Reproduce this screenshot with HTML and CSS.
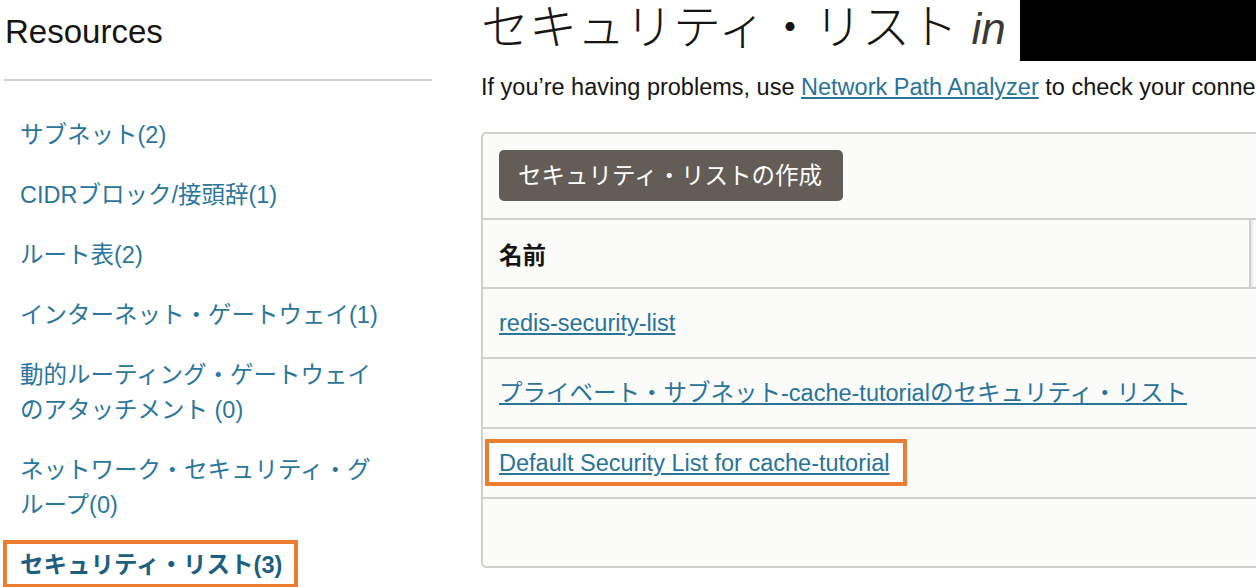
FILE: index.html
```html
<!DOCTYPE html>
<html lang="ja">
<head>
<meta charset="utf-8">
<title>セキュリティ・リスト</title>
<link rel="stylesheet" href="styles.css">
</head>
<body>
<div class="page">
  <aside class="sidebar">
    <h2 class="side-title">Resources</h2>
    <ul class="nav">
      <li class="nav-item"><a href="#">サブネット(2)</a></li>
      <li class="nav-item"><a href="#">CIDRブロック/接頭辞(1)</a></li>
      <li class="nav-item"><a href="#">ルート表(2)</a></li>
      <li class="nav-item"><a href="#">インターネット・ゲートウェイ(1)</a></li>
      <li class="nav-item"><a href="#">動的ルーティング・ゲートウェイ<br>のアタッチメント (0)</a></li>
      <li class="nav-item"><a href="#">ネットワーク・セキュリティ・グ<br>ループ(0)</a></li>
      <li class="nav-item selected"><a href="#">セキュリティ・リスト(3)</a></li>
    </ul>
  </aside>
  <main class="main">
    <div class="title-row">
      <h1 class="title">セキュリティ・リスト <em>in</em></h1>
      <div class="redacted"></div>
    </div>
    <p class="hint">If you’re having problems, use <a href="#">Network Path Analyzer</a> to check your connectivity configuration.</p>
    <section class="panel">
      <div class="toolbar">
        <button class="btn">セキュリティ・リストの作成</button>
      </div>
      <div class="thead">
        <div class="th th-name">名前</div>
        <div class="th th-rest"></div>
      </div>
      <div class="row"><a href="#">redis-security-list</a></div>
      <div class="row"><a href="#">プライベート・サブネット-cache-tutorialのセキュリティ・リスト</a></div>
      <div class="row"><a href="#" class="boxed">Default Security List for cache-tutorial</a></div>
      <div class="empty"></div>
    </section>
  </main>
</div>
</body>
</html>
```

FILE: styles.css
```css
html, body {
  margin: 0;
  padding: 0;
  overflow: hidden;
  background: #ffffff;
}

body {
  font-family: "Liberation Sans", "Noto Sans CJK JP", sans-serif;
  color: #161513;
  width: 1256px;
  height: 587px;
}

a {
  color: #2a7399;
}

.page {
  display: flex;
  align-items: flex-start;
}

/* Sidebar */
.sidebar {
  width: 428px;
  margin-left: 4px;
  flex: none;
}

.side-title {
  margin: 0;
  padding: 12px 0 0 1px;
  font-size: 33px;
  line-height: 40px;
  font-weight: 400;
  color: #161513;
  height: 67px;
  border-bottom: 2px solid #d1cdc9;
  box-sizing: content-box;
}

.nav {
  list-style: none;
  margin: 0;
  padding: 37px 0 0 16px;
  display: flex;
  flex-direction: column;
  gap: 25px;
}

.nav-item {
  font-size: 23.5px;
  line-height: 35px;
}

.nav-item a {
  text-decoration: none;
  color: #2b769c;
}

.nav-item.selected {
  width: fit-content;
  margin: -8px 0 0 -17px;
  padding: 4px 12px 1px 13px;
  border: 4px solid #ed7d31;
  background: #ffffff;
}

.nav-item.selected a {
  font-weight: 700;
  color: #1d5f80;
}

/* Main */
.main {
  margin-left: 49px;
  flex: 1;
  min-width: 0;
  white-space: nowrap;
}

.title-row {
  display: flex;
  align-items: flex-start;
  gap: 14px;
}

.title {
  margin: 1px 0 0;
  font-size: 48px;
  line-height: 54px;
  font-weight: 300;
  color: #161513;
  flex: none;
}

.title em {
  font-style: italic;
  font-weight: 400;
  font-size: 44px;
  color: #3a3836;
}

.redacted {
  flex: 1;
  height: 61px;
  background: #000000;
}

.hint {
  margin: 12px 0 0;
  font-size: 23.5px;
  line-height: 28px;
  color: #161513;
}

.hint a {
  color: #2a7399;
}

/* Panel */
.panel {
  margin-top: 31px;
  width: 820px;
  border: 2px solid #d3d0cc;
  border-radius: 5px;
  background: #fbfbfa;
}

.toolbar {
  padding: 16px 16px 17px;
}

.btn {
  font-family: inherit;
  font-size: 23.5px;
  line-height: 28px;
  color: #ffffff;
  background: #645c57;
  border: none;
  border-radius: 5px;
  height: 51px;
  padding: 0 21px 0 19px;
  display: block;
}

.thead {
  display: flex;
  height: 67px;
  border-top: 2px solid #d3d0cc;
}

.th {
  display: flex;
  align-items: center;
  font-size: 23.5px;
  font-weight: 700;
}

.th-name {
  width: 750px;
  padding-left: 16px;
  border-right: 2px solid #d3d0cc;
}

.th-rest {
  flex: 1;
  border-left: 2px solid #eeecea;
}

.row {
  display: flex;
  align-items: center;
  height: 68px;
  padding-left: 16px;
  border-top: 2px solid #d3d0cc;
  font-size: 23.5px;
  line-height: 28px;
}

.row a {
  color: #2a7399;
}

.boxed {
  display: inline-block;
  margin: -10px -15px -9px -14px;
  padding: 6px 13px 5px 10px;
  border: 4px solid #ed7d31;
  background: #ffffff;
}

.empty {
  height: 67px;
  border-top: 2px solid #d3d0cc;
}
```
